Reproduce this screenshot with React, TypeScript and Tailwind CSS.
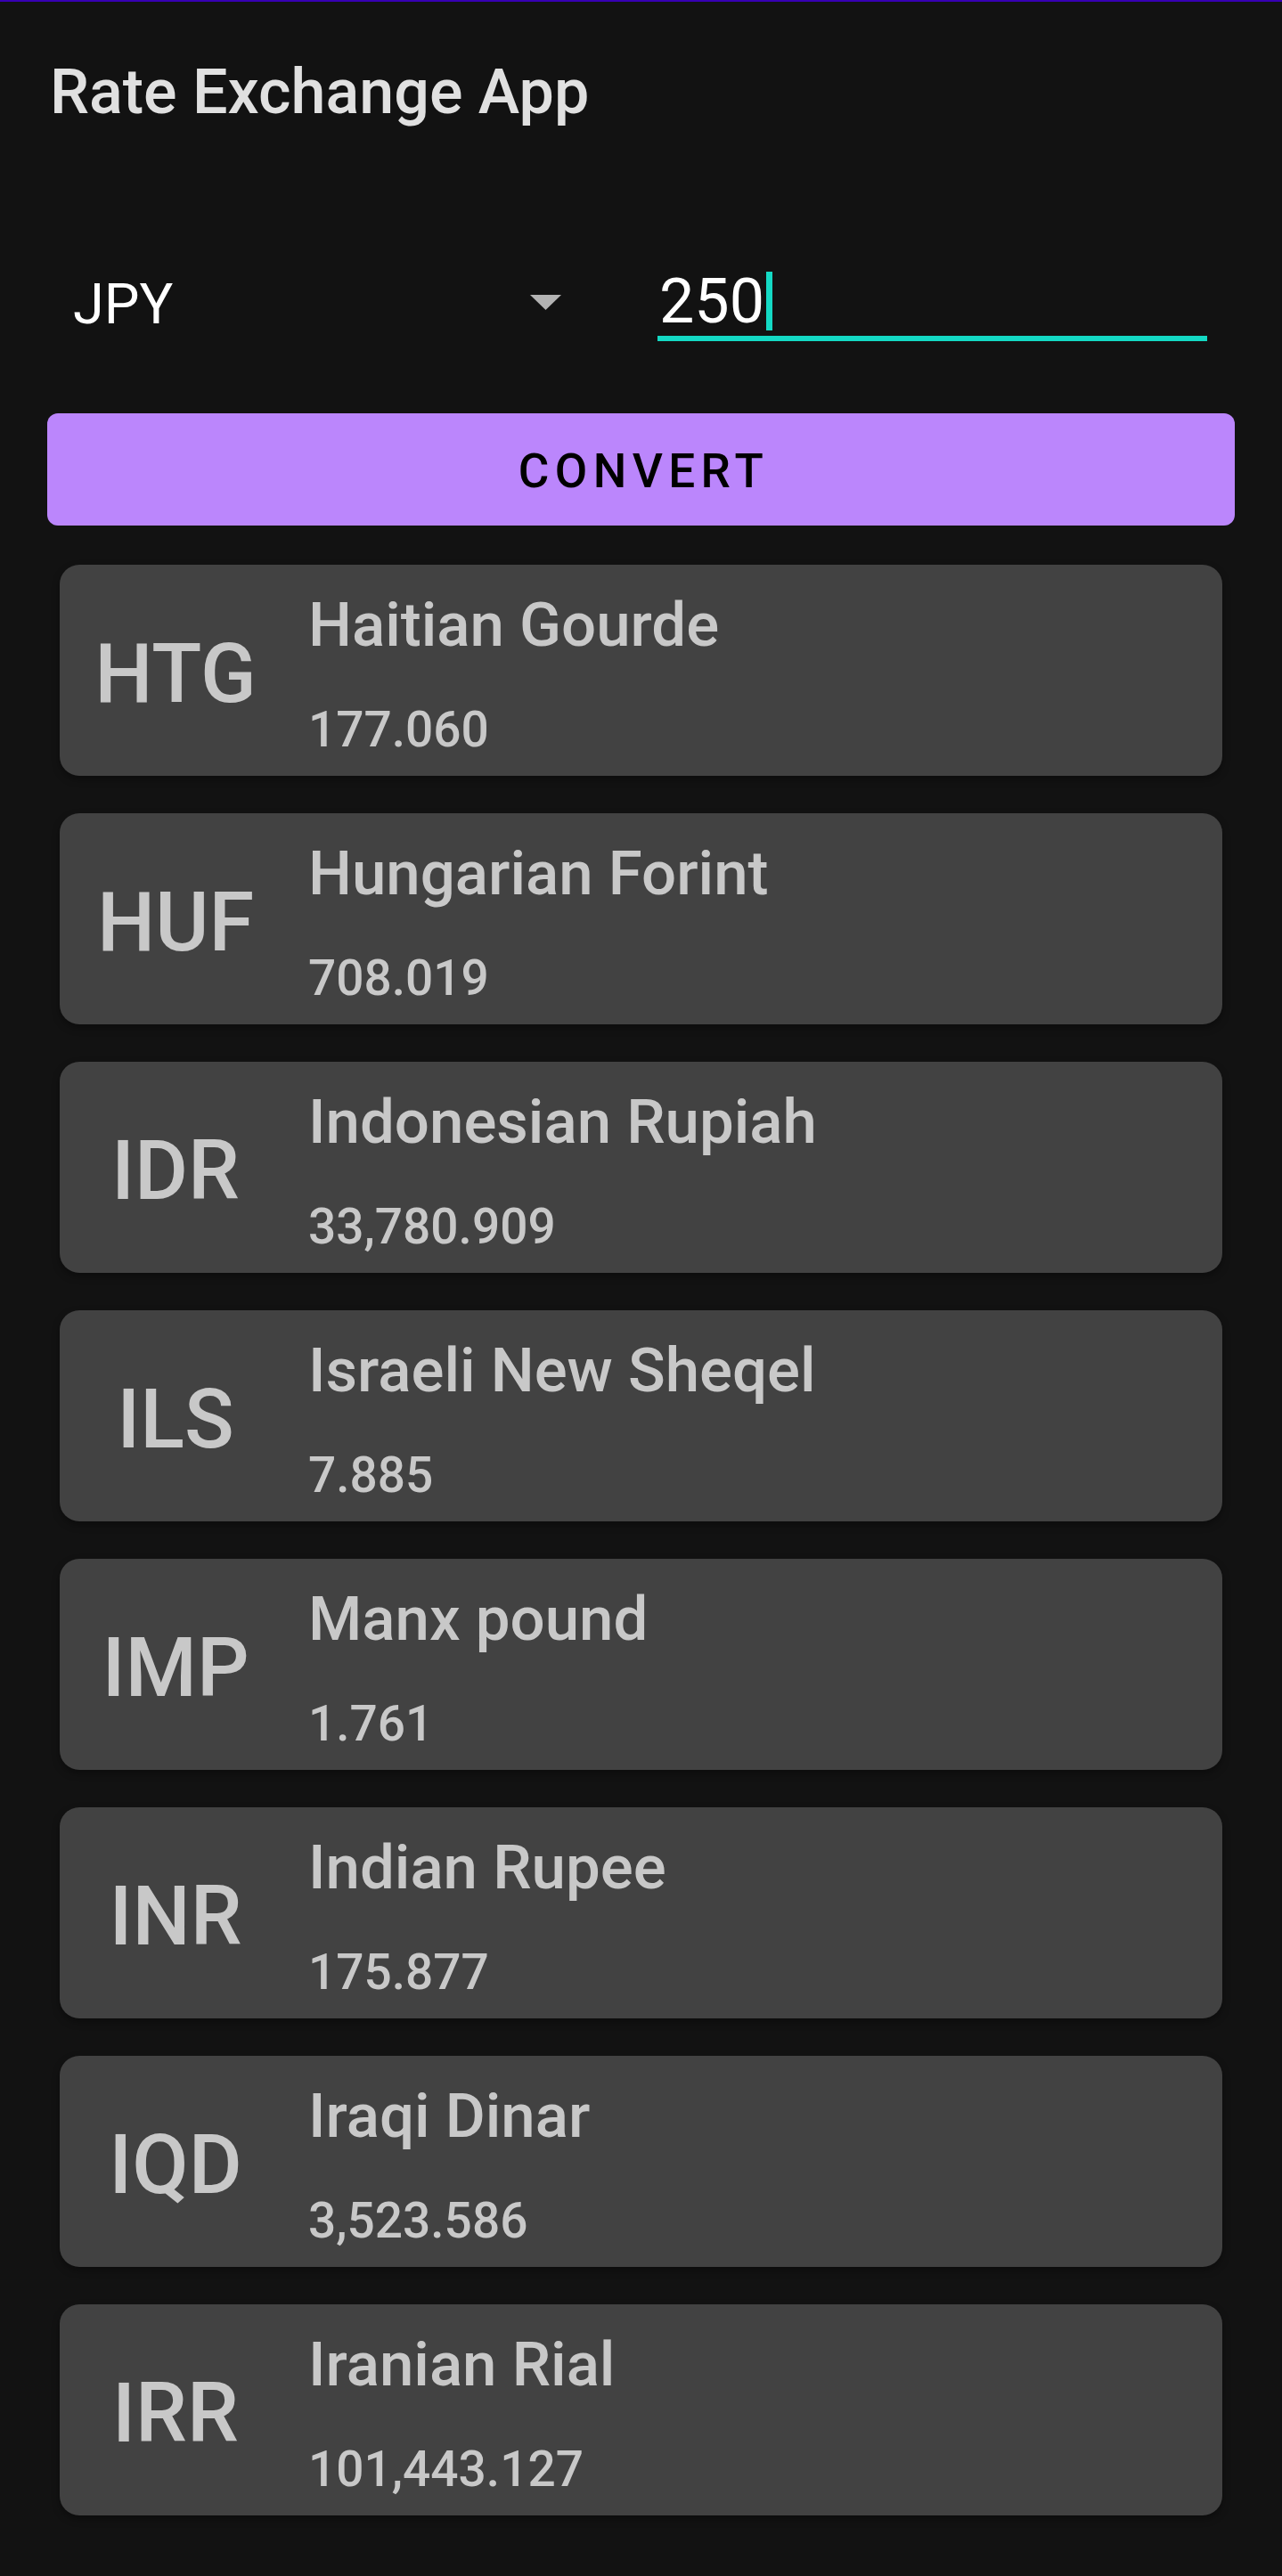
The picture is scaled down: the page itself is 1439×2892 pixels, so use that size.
const rates = [
  { code: "HTG", name: "Haitian Gourde", value: "177.060" },
  { code: "HUF", name: "Hungarian Forint", value: "708.019" },
  { code: "IDR", name: "Indonesian Rupiah", value: "33,780.909" },
  { code: "ILS", name: "Israeli New Sheqel", value: "7.885" },
  { code: "IMP", name: "Manx pound", value: "1.761" },
  { code: "INR", name: "Indian Rupee", value: "175.877" },
  { code: "IQD", name: "Iraqi Dinar", value: "3,523.586" },
  { code: "IRR", name: "Iranian Rial", value: "101,443.127" },
];

function RateCard({ code, name, value }: { code: string; name: string; value: string }) {
  return (
    <div className="flex h-[237px] items-center rounded-[22px] bg-[#424242] shadow-[0_4px_8px_rgba(0,0,0,0.35)]">
      <div className="w-[260px] pt-[9px] text-center text-[92px] leading-none font-medium text-[#c8c8c8]">
        {code}
      </div>
      <div className="ml-[19px] flex h-full flex-col pt-[27px] text-[#c8c8c8]">
        <span className="text-[69px] leading-[82px] font-medium">{name}</span>
        <span className="mt-[44px] text-[55px] leading-[64px] font-medium">{value}</span>
      </div>
    </div>
  );
}

export default function App() {
  return (
    <div className="min-h-[2892px] w-full bg-[#121212] font-['Roboto','Liberation_Sans',sans-serif]">
      {/* status strip */}
      <div className="h-[2px] bg-[#3700b3]" />

      <h1 className="mt-[60px] pl-[56px] text-[70px] leading-[82px] font-medium text-[#e0e0e0]">
        Rate Exchange App
      </h1>

      {/* currency picker + amount */}
      <div className="mt-[155px] flex pr-[84px] pl-[82px]">
        <div className="flex h-[78px] w-[548px] items-center justify-between">
          <span className="mt-[7px] text-[63px] leading-none text-white">JPY</span>
          <svg width="35" height="17" viewBox="0 0 35 17" className="mt-[3px]">
            <path d="M0 0h35L17.5 17z" fill="#b3b3b3" />
          </svg>
        </div>
        <div className="ml-[108px] flex flex-1 flex-col">
          <div className="flex h-[78px] items-center pl-[2px]">
            <span className="text-[70px] leading-[78px] text-white">250</span>
            <span className="ml-[2px] inline-block h-[66px] w-[7px] bg-[#14d9c4]" />
          </div>
          <div className="h-[6px] bg-[#14d9c4]" />
        </div>
      </div>

      <button className="mx-[53px] mt-[81px] flex h-[126px] w-[1333px] items-center justify-center rounded-[12px] bg-[#bb86fc] pt-[6px] pl-[6px] text-[53px] font-medium tracking-[0.12em] text-black">
        CONVERT
      </button>

      <div className="mx-[67px] mt-[44px] flex flex-col gap-[42px] pb-[60px]">
        {rates.map((r) => (
          <RateCard key={r.code} {...r} />
        ))}
      </div>
    </div>
  );
}
